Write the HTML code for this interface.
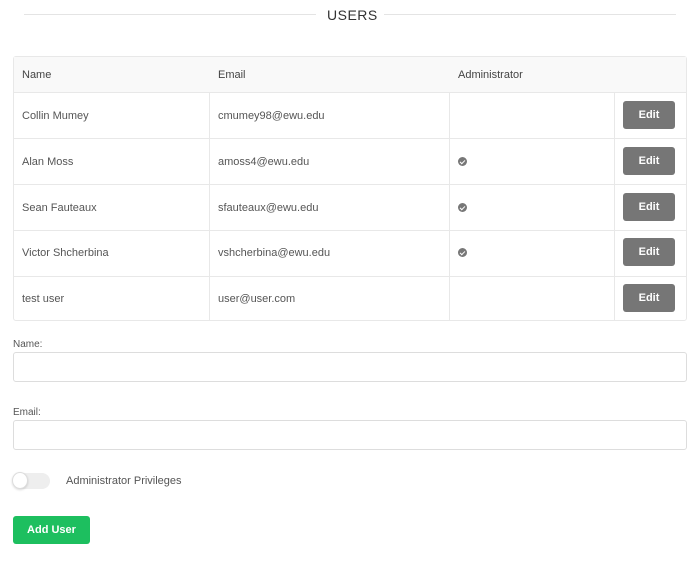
<!DOCTYPE html>
<html><head><style>
*{box-sizing:border-box;margin:0;padding:0}
body{width:700px;height:562px;background:#fff;font-family:"Liberation Sans",sans-serif;color:#444;position:relative;overflow:hidden}
.a{position:absolute}
.hr{position:absolute;top:14px;height:1px;background:#e4e4e4}
.cell{position:absolute;font-size:11px;color:#555}
.edit{position:absolute;left:623px;width:52px;height:28px;background:#767676;border-radius:3px;color:#fff;font-size:11px;font-weight:bold;text-align:center;line-height:29px}
.chk{position:absolute;left:458px;width:9px;height:9px;border-radius:50%;background:#777}
.chk:after{content:"";position:absolute;left:3px;top:1.5px;width:2px;height:4px;border:solid #fff;border-width:0 1.2px 1.2px 0;transform:rotate(45deg)}
.hl{position:absolute;left:13px;width:674px;height:1px;background:#e8e8e8}
.vl{position:absolute;top:92px;height:229px;width:1px;background:#e8e8e8}
.inp{position:absolute;left:13px;width:674px;height:30px;border:1px solid #ddd;border-radius:3px}
</style></head><body>
<div class="hr" style="left:24px;width:292px"></div>
<div class="hr" style="left:384px;width:292px"></div>
<div class="a" style="left:327px;top:7px;font-size:14px;color:#333;letter-spacing:0.5px">USERS</div>

<div class="a" style="left:13px;top:56px;width:674px;height:265px;border:1px solid #e8e8e8;border-radius:3px"></div>
<div class="a" style="left:14px;top:57px;width:672px;height:35px;background:#f9f9f9"></div>
<div class="hl" style="top:92px"></div>
<div class="hl" style="top:138px"></div>
<div class="hl" style="top:184px"></div>
<div class="hl" style="top:230px"></div>
<div class="hl" style="top:276px"></div>
<div class="vl" style="left:209px"></div>
<div class="vl" style="left:449px"></div>
<div class="vl" style="left:614px"></div>

<div class="cell" style="left:22px;top:69px;color:#444">Name</div>
<div class="cell" style="left:218px;top:69px;color:#444">Email</div>
<div class="cell" style="left:458px;top:69px;color:#444">Administrator</div>

<div class="cell" style="left:22px;top:110px">Collin Mumey</div>
<div class="cell" style="left:218px;top:110px">cmumey98@ewu.edu</div>
<div class="edit" style="top:101px">Edit</div>

<div class="cell" style="left:22px;top:156px">Alan Moss</div>
<div class="cell" style="left:218px;top:156px">amoss4@ewu.edu</div>
<div class="chk" style="top:157px"></div>
<div class="edit" style="top:147px">Edit</div>

<div class="cell" style="left:22px;top:202px">Sean Fauteaux</div>
<div class="cell" style="left:218px;top:202px">sfauteaux@ewu.edu</div>
<div class="chk" style="top:203px"></div>
<div class="edit" style="top:193px">Edit</div>

<div class="cell" style="left:22px;top:247px">Victor Shcherbina</div>
<div class="cell" style="left:218px;top:247px">vshcherbina@ewu.edu</div>
<div class="chk" style="top:248px"></div>
<div class="edit" style="top:238px">Edit</div>

<div class="cell" style="left:22px;top:293px">test user</div>
<div class="cell" style="left:218px;top:293px">user@user.com</div>
<div class="edit" style="top:284px">Edit</div>

<div class="cell" style="left:13px;top:339px;font-size:10px">Name:</div>
<div class="inp" style="top:352px"></div>
<div class="cell" style="left:13px;top:407px;font-size:10px">Email:</div>
<div class="inp" style="top:420px"></div>

<div class="a" style="left:13px;top:473px;width:37px;height:16px;border-radius:8px;background:#eee"></div>
<div class="a" style="left:12px;top:472px;width:16px;height:17px;border-radius:50%;background:#fff;border:1px solid #ddd;box-shadow:0 1px 2px rgba(0,0,0,.15)"></div>
<div class="cell" style="left:66px;top:475px">Administrator Privileges</div>

<div class="a" style="left:13px;top:516px;width:77px;height:28px;background:#1dbf5f;border-radius:3px;color:#fff;font-size:11px;font-weight:bold;text-align:center;line-height:29px">Add User</div>
</body></html>
